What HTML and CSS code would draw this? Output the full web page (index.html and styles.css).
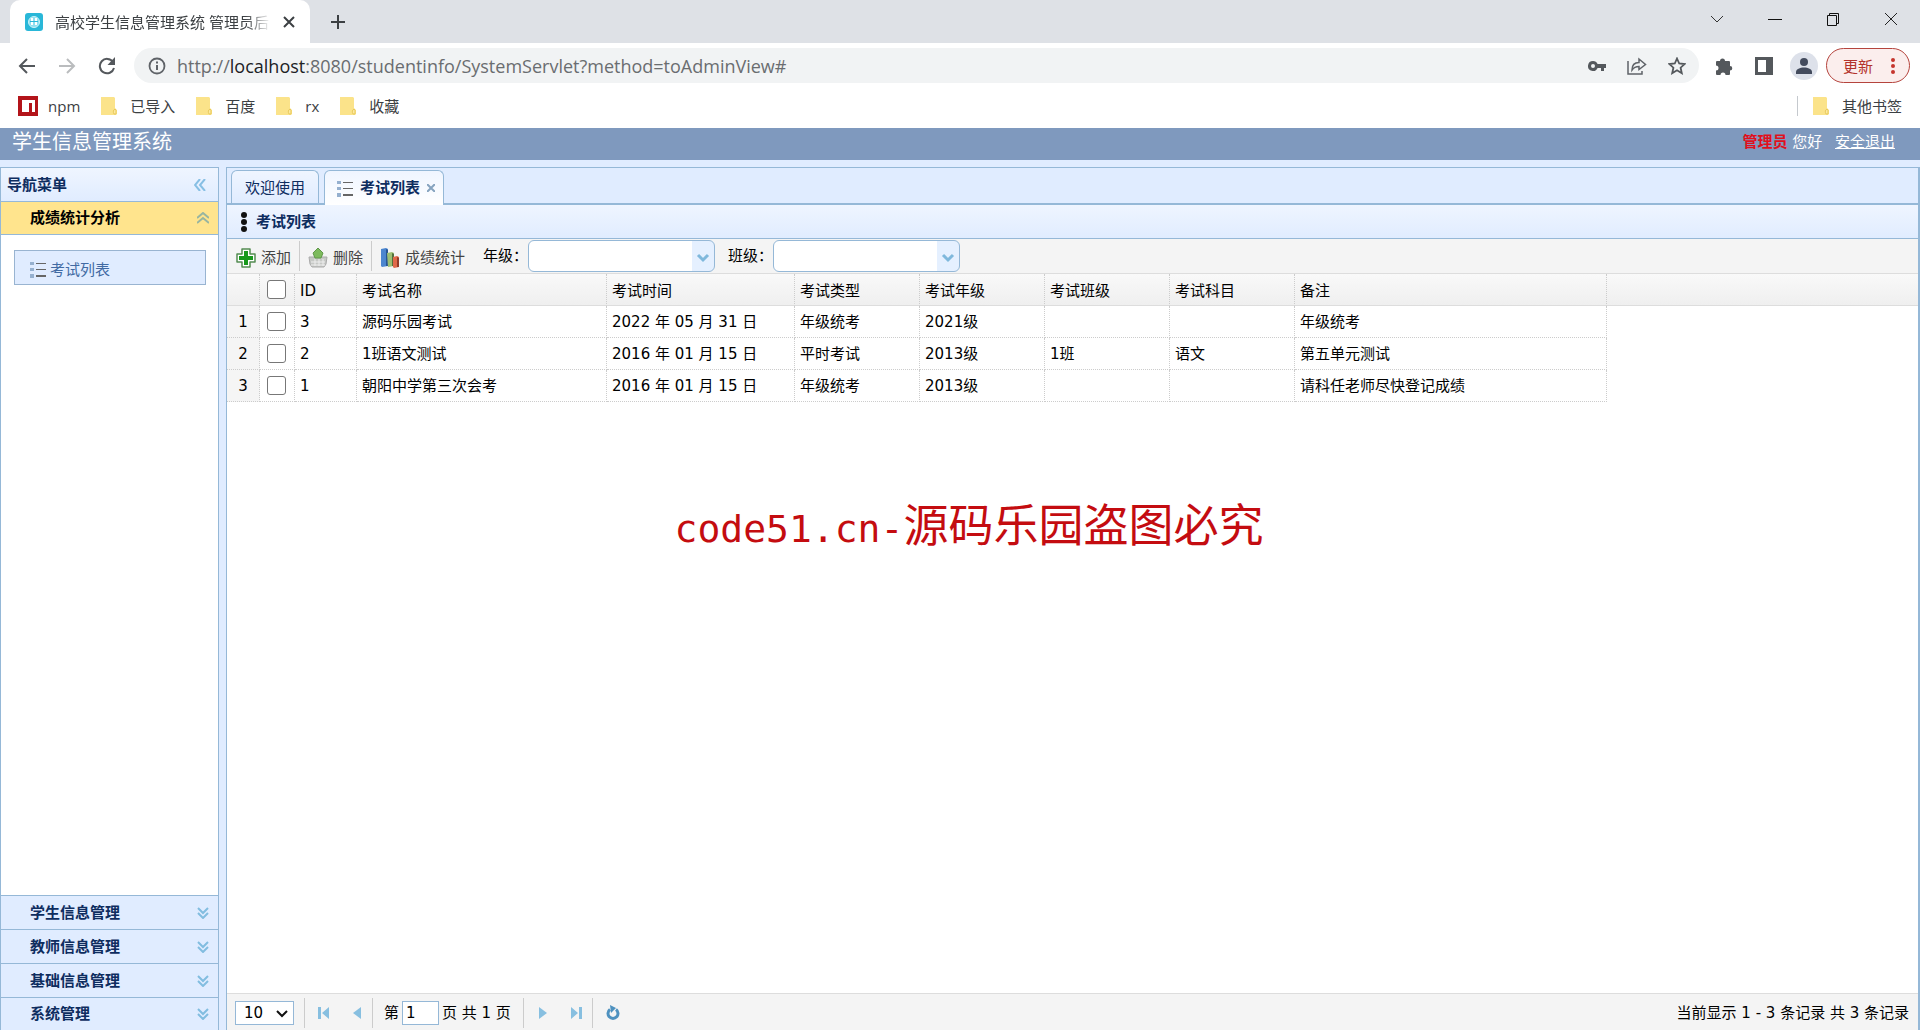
FILE: index.html
```html
<!DOCTYPE html>
<html lang="zh-CN">
<head>
<meta charset="utf-8">
<title>高校学生信息管理系统 管理员后台</title>
<link rel="stylesheet" href="styles.css">
</head>
<body>
<svg class="defs" aria-hidden="true">
  <symbol id="list" viewBox="0 0 16 17"><path fill="#95b0cf" d="M0 1h4v3H0zM0 7h4v3H0zM0 13h4v4H0z"/><path fill="#666" d="M6 2h10v1H6zM6 8h10v1H6zM6 14h10v2H6z"/></symbol>
  <symbol id="down2" viewBox="0 0 12 12"><path d="M1 1l5 5 5-5M1 6l5 5 5-5" fill="none" stroke="#82bde0" stroke-width="2"/></symbol>
  <symbol id="folder" viewBox="0 0 16 18"><path fill="#fbe38a" d="M0 0h13l1 1v10l2 2v4l-1 1H0z"/><path d="M14 12c-2 1-2 3-1 5h2v-4z" fill="#fdeaa0" stroke="#e8c95c"/></symbol>
  <symbol id="arrow" viewBox="0 0 14 10"><path d="M2 2l5 5 5-5" fill="none" stroke="#7fb8dc" stroke-width="3"/></symbol>
</svg>

<header class="browser">
  <div class="tabstrip">
    <div class="browser-tab">
      <svg width="18" height="18" viewBox="0 0 18 18"><rect width="18" height="18" rx="3" fill="#29b7d8"/><circle cx="9" cy="9" r="5.500" fill="#8fdff0" stroke="#c9f3fa"/><path d="M7 5v7M11 5v7" stroke="#fff" stroke-width="2"/><path d="M5 8.500h8" stroke="#29b7d8"/></svg>
      <span class="browser-title">高校学生信息管理系统 管理员后</span>
      <button class="icon-btn" aria-label="关闭标签页"><svg width="12" height="12" viewBox="0 0 12 12"><path d="M1 1l10 10M11 1L1 11" stroke="#3c4043" stroke-width="2"/></svg></button>
    </div>
    <button class="icon-btn new-tab" aria-label="新标签页"><svg width="16" height="16" viewBox="0 0 16 16"><path d="M8 1v14M1 8h14" stroke="#3c4043" stroke-width="2"/></svg></button>
    <div class="window-controls">
      <button class="icon-btn" aria-label="搜索标签页"><svg width="14" height="14" viewBox="0 0 14 14"><path d="M1 4l6 6 6-6" fill="none" stroke="#333"/></svg></button>
      <button class="icon-btn" aria-label="最小化"><svg width="14" height="14" viewBox="0 0 14 14"><path d="M0 7.500h14" stroke="#111"/></svg></button>
      <button class="icon-btn" aria-label="还原"><svg width="14" height="14" viewBox="0 0 14 14"><path d="M1.500 3.500h9v10h-9zM3.500 3V1.500h9v10H11" fill="none" stroke="#111"/></svg></button>
      <button class="icon-btn" aria-label="关闭"><svg width="14" height="14" viewBox="0 0 14 14"><path d="M1 1l12 12M13 1L1 13" stroke="#222"/></svg></button>
    </div>
  </div>
  <div class="toolbar">
    <button class="icon-btn" aria-label="后退"><svg width="18" height="18" viewBox="0 0 18 18"><path d="M17 9H2M9 2L2 9l7 7" fill="none" stroke="#54585c" stroke-width="2"/></svg></button>
    <button class="icon-btn" aria-label="前进"><svg width="18" height="18" viewBox="0 0 18 18"><path d="M1 9h15M9 2l7 7-7 7" fill="none" stroke="#babcbe" stroke-width="2"/></svg></button>
    <button class="icon-btn" aria-label="刷新"><svg width="18" height="18" viewBox="0 0 18 18"><path d="M15 5A7.200 7.200 0 1 0 16 11" fill="none" stroke="#54585c" stroke-width="2"/><path d="M17 0v8H9.500z" fill="#54585c"/></svg></button>
    <div class="address">
      <svg width="18" height="18" viewBox="0 0 18 18"><circle cx="9" cy="9" r="7.500" fill="none" stroke="#5f6368" stroke-width="1.800"/><path d="M8 8h2v5H8zM8 4.500h2v2H8z" fill="#5f6368"/></svg>
      <span class="url">http://<span class="host">localhost</span>:8080/studentinfo/SystemServlet?method=toAdminView#</span>
      <svg width="18" height="12" viewBox="0 0 18 12"><path fill="#54585c" fill-rule="evenodd" d="M5 1a5 5 0 1 0 4.600 7H13v3h3V8h2V4H9.600A5 5 0 0 0 5 1zm0 3a2 2 0 1 1 0 4 2 2 0 0 1 0-4z"/></svg>
      <svg width="20" height="18" viewBox="0 0 20 18"><path d="M1 4v13h14v-3M5 13c0-5 3-7.500 7-7.500V2l6.500 5.500-6.500 5V9.500c-3 0-5 .5-7 3.500z" fill="none" stroke="#5f6368" stroke-width="1.500"/></svg>
      <svg width="18" height="18" viewBox="0 0 18 18"><path d="M9 1.500l2.200 5 5.500.5-4.100 3.700 1.200 5.500L9 13.300l-4.800 2.900 1.200-5.500L1.300 7l5.500-.5z" fill="none" stroke="#54585c" stroke-width="1.800"/></svg>
    </div>
    <div class="toolbar-end">
      <svg width="18" height="18" viewBox="0 0 18 18"><path fill="#54585c" d="M5 4a2.500 2.500 0 0 1 5 0h4a1 1 0 0 1 1 1v4a2.300 2.300 0 0 1 0 4.600V17a1 1 0 0 1-1 1h-3.500a2.500 2.500 0 0 0-5 0H2a1 1 0 0 1-1-1v-3.500a2.500 2.500 0 0 0 0-5V5a1 1 0 0 1 1-1z"/></svg>
      <svg width="18" height="18" viewBox="0 0 18 18"><path fill="#54585c" fill-rule="evenodd" d="M0 0h18v18H0zM3 3v12h8V3z"/></svg>
      <svg class="avatar" width="28" height="28" viewBox="0 0 28 28"><circle cx="14" cy="14" r="14" fill="#dde1ea"/><circle cx="14" cy="10" r="4" fill="#434b5d"/><path d="M6 22v-2c0-3 4-4.500 8-4.500s8 1.500 8 4.500v2z" fill="#434b5d"/></svg>
      <button class="update">更新<svg width="4" height="16" viewBox="0 0 4 16"><g fill="#c5352d"><circle cx="2" cy="2" r="2"/><circle cx="2" cy="8" r="2"/><circle cx="2" cy="14" r="2"/></g></svg></button>
    </div>
  </div>
  <nav class="bookmarks" aria-label="书签">
    <a class="bookmark npm" href="#"><svg width="20" height="20" viewBox="0 0 20 20"><path fill="#b3141a" d="M0 0h20v20H0z"/><path fill="#fff" d="M4 4h13v12h-3V7h-3v9H4z"/></svg>npm</a>
    <a class="bookmark" href="#"><svg width="16" height="18"><use href="#folder"/></svg>已导入</a>
    <a class="bookmark" href="#"><svg width="16" height="18"><use href="#folder"/></svg>百度</a>
    <a class="bookmark" href="#"><svg width="16" height="18"><use href="#folder"/></svg>rx</a>
    <a class="bookmark" href="#"><svg width="16" height="18"><use href="#folder"/></svg>收藏</a>
    <a class="bookmark other" href="#"><svg width="16" height="18"><use href="#folder"/></svg>其他书签</a>
  </nav>
</header>

<div class="banner">
  <h1>学生信息管理系统</h1>
  <div class="user"><strong>管理员</strong> 您好 <a href="#">安全退出</a></div>
</div>

<div class="layout">
  <aside class="sidebar">
    <div class="side-title">导航菜单<button class="icon-btn" aria-label="折叠菜单"><svg width="12" height="12" viewBox="0 0 12 12"><path d="M6 0L1 6l5 6M11 0L6 6l5 6" fill="none" stroke="#87bfe4" stroke-width="2"/></svg></button></div>
    <button class="group active">成绩统计分析<svg width="12" height="12" viewBox="0 0 12 12"><path d="M0 6l6-5 6 5M0 11l6-5 6 5" fill="none" stroke="#98b5a0" stroke-width="2"/></svg></button>
    <div class="group-body"><a class="nav-item" href="#"><svg width="16" height="17"><use href="#list"/></svg>考试列表</a></div>
    <button class="group">学生信息管理<svg width="12" height="12"><use href="#down2"/></svg></button>
    <button class="group">教师信息管理<svg width="12" height="12"><use href="#down2"/></svg></button>
    <button class="group">基础信息管理<svg width="12" height="12"><use href="#down2"/></svg></button>
    <button class="group">系统管理<svg width="12" height="12"><use href="#down2"/></svg></button>
  </aside>

  <main class="content">
    <div class="tabs">
      <button class="tab">欢迎使用</button>
      <button class="tab selected"><svg width="16" height="17"><use href="#list"/></svg>考试列表<svg class="tab-close" width="8" height="8" viewBox="0 0 8 8"><path d="M0 0l8 8M8 0L0 8" stroke="#86a3bf" stroke-width="2"/></svg></button>
    </div>
    <h2 class="panel-title"><svg width="6" height="20" viewBox="0 0 6 20"><circle cx="3" cy="3" r="3"/><circle cx="3" cy="10" r="3"/><circle cx="3" cy="17" r="3"/></svg>考试列表</h2>
    <div class="grid-tools">
      <button class="tool"><svg width="20" height="20" viewBox="0 0 20 20"><path d="M6 1h8v5h5v8h-5v5H6v-5H1V6h5z" fill="#fff" stroke="#548c51" stroke-width="1.500" stroke-linejoin="round"/><path d="M8 3h4v5h5v4h-5v5H8v-5H3V8h5z" fill="#18991c"/></svg>添加</button>
      <button class="tool"><svg width="20" height="20" viewBox="0 0 20 20"><path d="M1 9h18l-1 7-2 3H4l-2-3z" fill="#c7c9c6" stroke="#aaa"/><path d="M3 14h14M3 17h14M7 11v7M11 11v7M15 11v7" stroke="#eee"/><path d="M10 0l5 5-2 5H7L5 5z" fill="#7dbb5d" stroke="#61974b"/></svg>删除</button>
      <button class="tool"><svg width="20" height="20" viewBox="0 0 20 20"><path d="M1 1l5-1 2 1v17l-6 1-1-1z" fill="#4c86cf"/><path d="M6 1l2 1v16H6z" fill="#285593"/><path d="M7 5l5-1 2 1v13l-6 1z" fill="#9dbf74"/><path d="M12 5l2 1v12h-2z" fill="#526f3d"/><path d="M13 9l4-1 2 1v10l-5 1-1-1z" fill="#e0694a"/><path d="M17 9l2 1v9h-2z" fill="#943b29"/></svg>成绩统计</button>
      <label class="filter"><span>年级：</span><span class="combo"><select><option></option></select><svg width="14" height="10"><use href="#arrow"/></svg></span></label>
      <label class="filter"><span>班级：</span><span class="combo"><select><option></option></select><svg width="14" height="10"><use href="#arrow"/></svg></span></label>
    </div>
    <div class="grid-body">
      <table>
        <colgroup><col class="c-num"><col class="c-check"><col class="c-id"><col class="c-name"><col class="c-date"><col class="c-std"><col class="c-std"><col class="c-std"><col class="c-std"><col class="c-note"><col></colgroup>
        <thead>
          <tr><th></th><th><input type="checkbox" aria-label="全选"></th><th>ID</th><th>考试名称</th><th>考试时间</th><th>考试类型</th><th>考试年级</th><th>考试班级</th><th>考试科目</th><th>备注</th><th></th></tr>
        </thead>
        <tbody>
          <tr><td>1</td><td><input type="checkbox" aria-label="选择第1行"></td><td>3</td><td>源码乐园考试</td><td>2022 年 05 月 31 日</td><td>年级统考</td><td>2021级</td><td></td><td></td><td>年级统考</td><td></td></tr>
          <tr><td>2</td><td><input type="checkbox" aria-label="选择第2行"></td><td>2</td><td>1班语文测试</td><td>2016 年 01 月 15 日</td><td>平时考试</td><td>2013级</td><td>1班</td><td>语文</td><td>第五单元测试</td><td></td></tr>
          <tr><td>3</td><td><input type="checkbox" aria-label="选择第3行"></td><td>1</td><td>朝阳中学第三次会考</td><td>2016 年 01 月 15 日</td><td>年级统考</td><td>2013级</td><td></td><td></td><td>请科任老师尽快登记成绩</td><td></td></tr>
        </tbody>
      </table>
    </div>
    <footer class="pager">
      <div class="pager-group"><span class="page-size"><select aria-label="每页条数"><option>10</option></select><svg width="12" height="8" viewBox="0 0 12 8"><path d="M1 1l5 5 5-5" fill="none" stroke="#111" stroke-width="2"/></svg></span></div>
      <div class="pager-group arrows">
        <button class="icon-btn" aria-label="首页"><svg width="12" height="12" viewBox="0 0 12 12"><path fill="#87bfe0" d="M0 0h3v12H0zM11 0v12L4 6z"/></svg></button>
        <button class="icon-btn" aria-label="上一页"><svg width="12" height="12" viewBox="0 0 12 12"><path fill="#87bfe0" d="M10 0v12L2 6z"/></svg></button>
      </div>
      <div class="pager-group pages"><label for="page">第</label><input id="page" type="text" value="1"><span>页 共 1 页</span></div>
      <div class="pager-group arrows">
        <button class="icon-btn" aria-label="下一页"><svg width="12" height="12" viewBox="0 0 12 12"><path fill="#87bfe0" d="M2 0v12l8-6z"/></svg></button>
        <button class="icon-btn" aria-label="末页"><svg width="12" height="12" viewBox="0 0 12 12"><path fill="#87bfe0" d="M1 0v12l7-6zM9 0h3v12H9z"/></svg></button>
      </div>
      <div class="pager-group"><button class="icon-btn" aria-label="重新加载"><svg width="14" height="16" viewBox="0 0 14 16"><path d="M4 4.500a5 5 0 1 0 6 0" fill="none" stroke="#4e91bf" stroke-width="3"/><path d="M4 0l6 3-5 5z" fill="#4e91bf"/></svg></button></div>
      <span class="summary">当前显示 1 - 3 条记录 共 3 条记录</span>
    </footer>
  </main>
</div>
<div class="watermark"><span class="latin">code51.cn-</span>源码乐园盗图必究</div>
</body>
</html>
```
FILE: styles.css
```css
* { box-sizing: border-box; }
body {
  position: relative;
  margin: 0;
  min-height: 100vh;
  display: flex;
  flex-direction: column;
  background: #e0ecff;
  color: #000;
  font: 15px/20px "DejaVu Sans", "Noto Sans CJK SC", sans-serif;
}
svg { display: block; flex: none; }
.defs { position: absolute; width: 0; height: 0; }
button, input, select { font: inherit; color: inherit; margin: 0; }
button { border: 0; padding: 0; background: none; }
.icon-btn { display: flex; align-items: center; justify-content: center; }

/* Browser window */
.browser { background: #fff; font-family: "Open Sans", "Noto Sans CJK SC", sans-serif; color: #3c4043; }
.tabstrip { display: flex; align-items: center; height: 43px; padding-left: 10px; background: #dee1e6; }
.browser-tab {
  display: flex; align-items: center; align-self: stretch; gap: 12px;
  width: 300px; padding: 0 15px; background: #fff; border-radius: 10px 10px 0 0;
}
.browser-title {
  flex: 1; white-space: nowrap;
  -webkit-mask-image: linear-gradient(to right, #000 88%, transparent);
  mask-image: linear-gradient(to right, #000 88%, transparent);
}
.new-tab { margin-left: 20px; }
.window-controls { display: flex; gap: 44px; margin-left: auto; padding: 0 22px 6px 0; }
.toolbar { display: flex; align-items: center; gap: 22px; height: 45px; padding: 0 10px 0 18px; }
.address {
  display: flex; flex: 1; align-items: center; gap: 21px; height: 35px;
  margin-left: -4px; padding: 0 13px 0 14px; border-radius: 18px; background: #f1f3f4;
}
.url { flex: 1; margin-left: -10px; overflow: hidden; white-space: nowrap; font-size: 18px; line-height: 26px; color: #6a6d70; }
.host { color: #202124; }
.toolbar-end { display: flex; align-items: center; gap: 22px; margin-left: -6px; }
.avatar { margin-left: -5px; }
.update {
  display: flex; align-items: center; gap: 18px; height: 35px; padding: 0 14px 0 16px; margin-left: -14px;
  border: 1px solid #b5443d; border-radius: 18px; background: #fbeeed; color: #b3332b;
}
.bookmarks { display: flex; align-items: center; gap: 21px; height: 40px; padding: 0 18px 4px 18px; }
.bookmark { display: flex; align-items: center; gap: 13px; color: inherit; text-decoration: none; }
.npm { gap: 10px; }
.other { margin-left: auto; padding-left: 15px; border-left: 1px solid #c5c9ce; }

/* Application banner */
.banner {
  display: flex; justify-content: space-between; align-items: center;
  height: 32px; padding: 0 25px 4px 12px; background: #7f99be; color: #fff;
}
.banner h1 { margin: 0; font-size: 20px; line-height: 26px; font-weight: 400; }
.banner a { margin-left: 8px; color: #fff; }
.banner strong { color: #e0101c; }

.layout { display: flex; flex: 1; gap: 7px; padding-top: 7px; }

/* Navigation */
.sidebar { display: flex; flex-direction: column; width: 219px; border: 1px solid #95b8d7; border-bottom: 0; background: #fff; }
.side-title {
  display: flex; align-items: center; justify-content: space-between; height: 33px; padding: 0 12px 0 6px;
  background: linear-gradient(#eff5ff, #e0ecff); color: #0e2d5f; font-weight: 700;
}
.group {
  display: flex; align-items: center; justify-content: space-between; height: 34px; padding: 0 9px 0 29px;
  border-top: 1px solid #95b8d7; background: #e0ecff; color: #0e2d5f; font-weight: 700;
}
.group.active { background: #ffe48d; border-bottom: 1px solid #95b8d7; color: #000; }
.group:last-child { height: 33px; }
.group-body { flex: 1; padding: 15px 12px 0 13px; }
.nav-item {
  display: flex; align-items: center; height: 35px; padding: 4px 0 0 15px; gap: 4px;
  border: 1px solid #99b4d1; background: #e0ecff; color: #416aa3; text-decoration: none;
}

/* Tabs and panel */
.content { display: flex; flex: 1; flex-direction: column; min-width: 0; border: 1px solid #95b8d7; border-right-width: 2px; border-bottom: 0; background: #fff; }
.tabs { display: flex; align-items: flex-end; gap: 5px; height: 37px; padding-left: 4px; background: #e0ecff; border-bottom: 2px solid #95b8d7; }
.tab {
  display: flex; align-items: center; height: 33px; padding: 2px 13px 0;
  border: 1px solid #95b8d7; border-bottom: 0; border-radius: 6px 6px 0 0;
  background: linear-gradient(#eff5ff, #e0ecff); color: #0e2d5f;
}
.tab.selected { height: 35px; margin-bottom: -2px; padding: 0 8px 0 12px; gap: 7px; background: linear-gradient(#eff5ff, #fff); font-weight: 700; }
.panel-title {
  display: flex; align-items: center; gap: 9px; height: 34px; margin: 0; padding: 1px 0 0 14px;
  border-bottom: 1px solid #95b8d7; background: linear-gradient(#eff5ff, #e0ecff);
  color: #0e2d5f; font-size: 15px; line-height: 20px;
}
.panel-title svg { fill: #111; }
.grid-tools { display: flex; align-items: center; height: 35px; padding-left: 1px; border-bottom: 1px solid #ddd; background: #f4f4f4; }
.tool { display: flex; align-items: center; gap: 5px; height: 30px; padding: 3px 8px 0; color: #444; }
.tool + .tool { border-left: 1px solid #ccc; }
.filter { display: flex; align-items: center; margin-left: 10px; }
.filter > span:first-child { width: 45px; white-space: nowrap; }
.combo { position: relative; display: block; width: 187px; height: 32px; border: 1px solid #95b8d7; border-radius: 6px; overflow: hidden; background: linear-gradient(to left, #e5f0ff 22px, #fff 22px); }
.combo select, .page-size select { appearance: none; width: 100%; height: 100%; padding: 0 8px; border: 0; background: transparent; }
.combo svg { position: absolute; right: 4px; top: 12px; pointer-events: none; }
.filter + .filter { margin-left: 13px; }

/* Data grid */
.grid-body { flex: 1; }
table { width: 100%; table-layout: fixed; border-collapse: separate; border-spacing: 0; }
.c-num { width: 33px; }
.c-check { width: 35px; }
.c-id { width: 62px; }
.c-name { width: 250px; }
.c-date { width: 188px; }
.c-std { width: 125px; }
.c-note { width: 312px; }
th, td { height: 32px; padding: 0 5px; border: 0 dotted #ccc; border-width: 0 1px 1px 0; text-align: left; font-weight: 400; white-space: nowrap; }
th { padding-top: 2px; border-bottom: 1px solid #ddd; background: linear-gradient(#f9f9f9, #efefef); }
th:last-child { border-right: 0; }
td:last-child { border: 0; }
td:first-child { background: #f5f5f5; text-align: center; }
th:nth-child(2), td:nth-child(2) { padding: 0 0 0 7px; }
input[type="checkbox"] { display: block; appearance: none; width: 19px; height: 19px; margin: 0; border: 1px solid #777; border-radius: 3px; background: #fff; }

/* Pagination */
.pager { display: flex; align-items: center; height: 37px; padding: 2px 9px 0 8px; border-top: 1px solid #ddd; background: #f4f4f4; }
.pager-group { display: flex; align-items: center; height: 30px; }
.pager-group + .pager-group { border-left: 1px solid #ccc; margin-left: 10px; padding-left: 13px; }
.pager-group.arrows { gap: 21px; }
.pager-group + .pages { margin-left: 9px; padding-left: 11px; }
.pages + .pager-group { margin-left: 12px; }
.page-size { position: relative; display: block; width: 59px; height: 24px; border: 1px solid #95b8d7; background: #fff; }
.page-size svg { position: absolute; right: 5px; top: 8px; pointer-events: none; }
.pages input { width: 37px; height: 24px; margin: 0 3px; padding: 0 3px; border: 1px solid #95b8d7; background: #fff; }
.summary { margin-left: auto; }

/* Mark that lies over the grid */
.watermark {
  position: absolute; left: 0; right: 0; top: 490px; padding-left: 18px; text-align: center; pointer-events: none;
  color: #c40c10; font: 45px/66px "Noto Sans CJK SC", sans-serif;
}
.latin { font: 38px/66px "DejaVu Sans Mono", monospace; }
```
